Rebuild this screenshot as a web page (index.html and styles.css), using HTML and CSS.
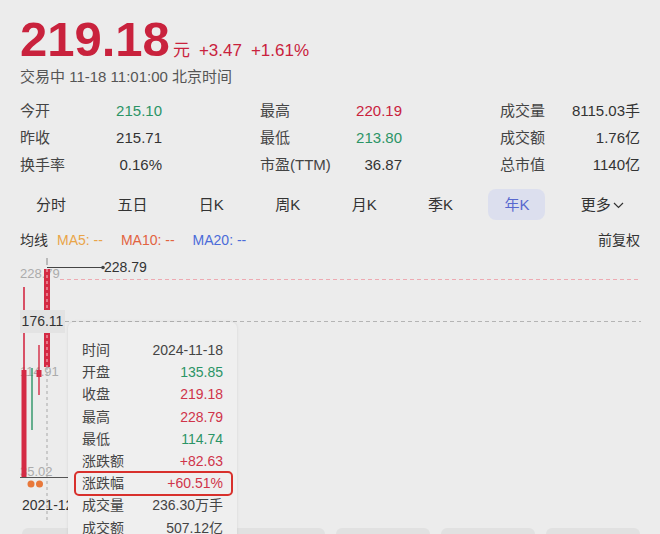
FILE: index.html
```html
<!DOCTYPE html>
<html lang="zh-CN">
<head>
<meta charset="utf-8">
<link rel="stylesheet" href="styles.css">
</head>
<body>
<div class="panel">
  <div class="price-row">
    <span class="price">219.18</span><span class="unit">元</span><span class="chg">+3.47</span><span class="chg">+1.61%</span>
  </div>
  <div class="status">交易中 11-18 11:01:00 北京时间</div>

  <div class="stats">
    <div class="cell"><span class="lbl">今开</span><span class="val green">215.10</span></div>
    <div class="cell"><span class="lbl">最高</span><span class="val red">220.19</span></div>
    <div class="cell"><span class="lbl">成交量</span><span class="val">8115.03手</span></div>
    <div class="cell"><span class="lbl">昨收</span><span class="val">215.71</span></div>
    <div class="cell"><span class="lbl">最低</span><span class="val green">213.80</span></div>
    <div class="cell"><span class="lbl">成交额</span><span class="val">1.76亿</span></div>
    <div class="cell"><span class="lbl">换手率</span><span class="val">0.16%</span></div>
    <div class="cell"><span class="lbl">市盈(TTM)</span><span class="val">36.87</span></div>
    <div class="cell"><span class="lbl">总市值</span><span class="val">1140亿</span></div>
  </div>

  <div class="tabs">
    <span class="tab">分时</span>
    <span class="tab">五日</span>
    <span class="tab">日K</span>
    <span class="tab">周K</span>
    <span class="tab">月K</span>
    <span class="tab">季K</span>
    <span class="tab active">年K</span>
    <span class="tab more">更多<svg class="chev" width="11" height="7" viewBox="0 0 11 7"><path d="M1 1 L5.5 5.5 L10 1" fill="none" stroke="#333" stroke-width="1.2"/></svg></span>
  </div>

  <div class="ma-row">
    <div class="ma-left">
      <span class="ma-title">均线</span>
      <span class="ma5">MA5: --</span>
      <span class="ma10">MA10: --</span>
      <span class="ma20">MA20: --</span>
    </div>
    <span class="adj">前复权</span>
  </div>
</div>

<div class="chart">
  <span class="axis axis-top">228.79</span>
  <span class="axis axis-mid">114.91</span>
  <span class="axis axis-low">35.02</span>
  <svg class="plot" width="660" height="278" viewBox="0 0 660 278">
    <line x1="60" y1="29.5" x2="641" y2="29.5" stroke="#eeaab2" stroke-width="1" stroke-dasharray="4 3"/>
    <line x1="65" y1="71.5" x2="641" y2="71.5" stroke="#b4b4b4" stroke-width="1" stroke-dasharray="4 3"/>
    <line x1="24" y1="37" x2="24" y2="121" stroke="#d42a44" stroke-width="1.6"/>
    <rect x="21.5" y="120" width="5" height="108" fill="#d42a44"/>
    <line x1="32" y1="118" x2="32" y2="180" stroke="#2b9466" stroke-width="1.4"/>
    <line x1="39" y1="95" x2="39" y2="145" stroke="#d42a44" stroke-width="1.4"/>
    <rect x="36.5" y="120" width="5" height="7" fill="#d42a44"/>
    <rect x="44" y="19" width="6" height="98" fill="#d42a44"/>
    <line x1="47" y1="8" x2="47" y2="15" stroke="#888" stroke-width="1"/>
    <line x1="47" y1="19" x2="47" y2="117" stroke="#f6c6cc" stroke-width="1" stroke-dasharray="3 3"/>
    <line x1="47" y1="117" x2="47" y2="270" stroke="#a8a8a8" stroke-width="1" stroke-dasharray="3 3"/>
    <line x1="47" y1="17.5" x2="102" y2="17.5" stroke="#444" stroke-width="1"/>
    <circle cx="103" cy="17.5" r="1.8" fill="#444"/>
    <line x1="20" y1="227.5" x2="68" y2="227.5" stroke="#555" stroke-width="1"/>
    <circle cx="31" cy="234" r="3.5" fill="#e8783a"/>
    <circle cx="39.5" cy="234" r="3.5" fill="#e8783a"/>
  </svg>
  <span class="mark">228.79</span>
  <span class="cur">176.11</span>
  <span class="date">2021-12</span>

  <div class="tooltip">
    <div class="trow"><span>时间</span><span class="tv">2024-11-18</span></div>
    <div class="trow"><span>开盘</span><span class="tv green">135.85</span></div>
    <div class="trow"><span>收盘</span><span class="tv red">219.18</span></div>
    <div class="trow"><span>最高</span><span class="tv red">228.79</span></div>
    <div class="trow"><span>最低</span><span class="tv green">114.74</span></div>
    <div class="trow"><span>涨跌额</span><span class="tv red">+82.63</span></div>
    <div class="trow hl"><span>涨跌幅</span><span class="tv red">+60.51%</span></div>
    <div class="trow"><span>成交量</span><span class="tv">236.30万手</span></div>
    <div class="trow"><span>成交额</span><span class="tv">507.12亿</span></div>
  </div>
</div>

<div class="buttons">
  <span class="btn"></span>
  <span class="btn"></span>
  <span class="btn"></span>
  <span class="btn"></span>
  <span class="btn"></span>
  <span class="btn"></span>
</div>
</body>
</html>
```

FILE: styles.css
```css
* { box-sizing: border-box; }
html, body {
  margin: 0;
  padding: 0;
}
body {
  width: 660px;
  height: 534px;
  overflow: hidden;
  background: #ececec;
  font-family: "Liberation Sans", "Noto Sans CJK SC", sans-serif;
  color: #333;
}
.panel {
  margin: 0;
  padding: 12px 20px 0 20px;
  border-top: 0;
}
.price-row {
  height: 55px;
  line-height: 55px;
  white-space: nowrap;
  color: #c9223d;
}
.price {
  font-size: 49px;
  font-weight: bold;
}
.unit {
  font-size: 17px;
  line-height: 1;
  margin-left: 3px;
}
.chg {
  font-size: 17px;
  line-height: 1;
  margin-left: 9px;
}
.status {
  font-size: 15px;
  line-height: 20px;
  color: #555;
}
.stats {
  margin-top: 10px;
  display: grid;
  grid-template-columns: 142px 142px 140px;
  column-gap: 98px;
  font-size: 15px;
  line-height: 27px;
}
.cell {
  display: flex;
  justify-content: space-between;
  white-space: nowrap;
}
.lbl { color: #444; }
.val { color: #333; }
.green { color: #2b9466; }
.red { color: #c9223d; }

.tabs {
  margin-top: 11px;
  display: flex;
  gap: 19.4px;
  font-size: 15px;
}
.tab {
  height: 31px;
  line-height: 31px;
  padding: 0 16px;
  border-radius: 8px;
  color: #333;
  white-space: nowrap;
}
.tab.active {
  background: #dcdfee;
  color: #5868cf;
}
.more {
  display: flex;
  align-items: center;
  gap: 2px;
}
.chev { margin-top: 2px; }

.ma-row {
  margin-top: 10px;
  height: 20px;
  line-height: 20px;
  font-size: 14px;
  display: flex;
  justify-content: space-between;
}
.ma-left {
  display: flex;
  gap: 18px;
}
.ma-title { color: #333; margin-right: -9px; }
.ma5 { color: #e9a548; }
.ma10 { color: #e2633f; }
.ma20 { color: #4a6bd9; }
.adj { color: #333; }

.chart {
  position: relative;
  height: 278px;
}
.plot {
  position: absolute;
  left: 0;
  top: 0;
}
.axis {
  position: absolute;
  left: 20px;
  font-size: 13px;
  line-height: 16px;
  color: #ababab;
}
.axis-top { top: 16px; }
.axis-mid { top: 114px; }
.axis-low { top: 214px; }
.mark {
  position: absolute;
  left: 104px;
  top: 9px;
  font-size: 14px;
  line-height: 16px;
  color: #333;
}
.cur {
  position: absolute;
  left: 20px;
  top: 60px;
  width: 45px;
  height: 23px;
  line-height: 23px;
  font-size: 14px;
  text-align: center;
  background: #e3e3e3;
  color: #333;
}
.date {
  position: absolute;
  left: 22px;
  top: 246px;
  font-size: 14px;
  line-height: 18px;
  color: #333;
}
.tooltip {
  position: absolute;
  left: 68px;
  top: 72px;
  width: 169px;
  height: 240px;
  padding: 17px 14px 0 14px;
  background: #efefef;
  border-radius: 6px;
  box-shadow: 0 0 3px rgba(0, 0, 0, 0.10);
  z-index: 2;
  font-size: 14px;
  line-height: 22.2px;
}
.trow {
  display: flex;
  justify-content: space-between;
  white-space: nowrap;
  color: #444;
}
.tv { color: #444; }
.tv.green { color: #2b9466; }
.tv.red { color: #d0344a; }
.hl { position: relative; }
.hl::after {
  content: "";
  position: absolute;
  left: -8px;
  right: -10px;
  top: -1px;
  bottom: -2px;
  border: 2px solid #d8302c;
  border-radius: 5px;
}
.buttons {
  display: flex;
  gap: 11px;
  padding: 0 20px 0 22px;
}
.btn {
  flex: 1;
  height: 30px;
  background: #e1e1e1;
  border-radius: 6px;
}
```
